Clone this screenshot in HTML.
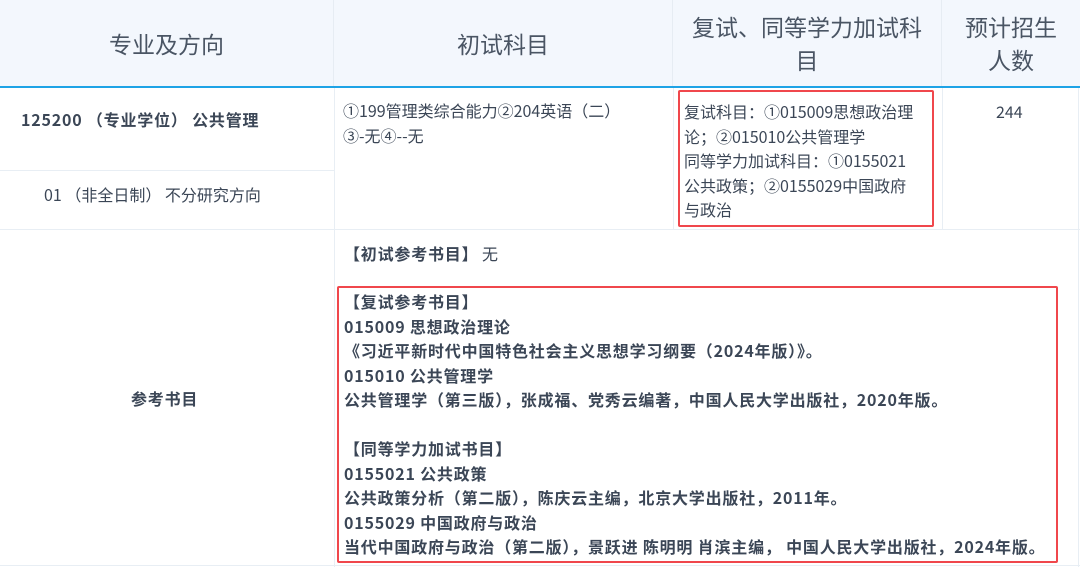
<!DOCTYPE html>
<html><head><meta charset="utf-8"><style>
body{margin:0;width:1080px;height:567px;overflow:hidden;background:#fff;font-family:"Noto Sans CJK SC","Liberation Sans",sans-serif;color:#3b4656;position:relative}
div{position:absolute;box-sizing:border-box}
.h{top:0;height:86px;background:#f3f7fd;font-size:23px;color:#4a5564;display:flex;align-items:center;justify-content:center;text-align:center;line-height:33px;border-right:1px solid #e6ecf3}
.vl{width:1px;background:#e8eef4}
.hl{height:1px;background:#e8eef4}
.t{font-size:16px;line-height:24.5px;white-space:nowrap}
.b{font-weight:bold;letter-spacing:0.8px}
</style></head><body>
<div class="h" style="left:0;width:334px">专业及方向</div>
<div class="h" style="left:334px;width:339px">初试科目</div>
<div class="h" style="left:673px;width:269px;padding:0 10px">复试、同等学力加试科目</div>
<div class="h" style="left:942px;width:138px;padding:0 18px;border-right:none">预计招生人数</div>
<div style="left:0;top:86px;width:1080px;height:2px;background:#1ea3e6"></div>
<div class="vl" style="left:334px;top:88px;height:479px"></div>
<div class="vl" style="left:673px;top:88px;height:141px"></div>
<div class="vl" style="left:942px;top:88px;height:141px"></div>
<div class="vl" style="left:1078px;top:88px;height:479px"></div>
<div class="hl" style="left:0;top:170px;width:334px"></div>
<div class="hl" style="left:0;top:229px;width:1080px"></div>
<div class="hl" style="left:0;top:565px;width:1080px"></div>
<div class="t b" style="left:21px;top:107px">125200 （专业学位） 公共管理</div>
<div class="t" style="left:44px;top:182px">01 （非全日制） 不分研究方向</div>
<div class="t" style="left:343px;top:98px">①199管理类综合能力②204英语（二）<br>③-无④--无</div>
<div style="left:678px;top:90px;width:256px;height:137px;border:2px solid #f0474c;border-radius:2px"></div>
<div class="t" style="left:684px;top:99px">复试科目：①015009思想政治理<br>论；②015010公共管理学<br>同等学力加试科目：①0155021<br>公共政策；②0155029中国政府<br>与政治</div>
<div class="t" style="left:996px;top:99px">244</div>
<div class="t b" style="left:131px;top:386px">参考书目</div>
<div class="t" style="left:344px;top:241px"><b class="b">【初试参考书目】</b> 无</div>
<div style="left:337px;top:286px;width:721px;height:277px;border:2px solid #f0474c;border-radius:2px"></div>
<div class="t b" style="left:344px;top:289px">【复试参考书目】<br>015009 思想政治理论<br>《习近平新时代中国特色社会主义思想学习纲要（2024年版）》。<br>015010 公共管理学<br>公共管理学（第三版），张成福、党秀云编著，中国人民大学出版社，2020年版。<br>&nbsp;<br>【同等学力加试书目】<br>0155021 公共政策<br>公共政策分析（第二版），陈庆云主编，北京大学出版社，2011年。<br>0155029 中国政府与政治<br>当代中国政府与政治（第二版），景跃进 陈明明 肖滨主编， 中国人民大学出版社，2024年版。</div>
</body></html>
